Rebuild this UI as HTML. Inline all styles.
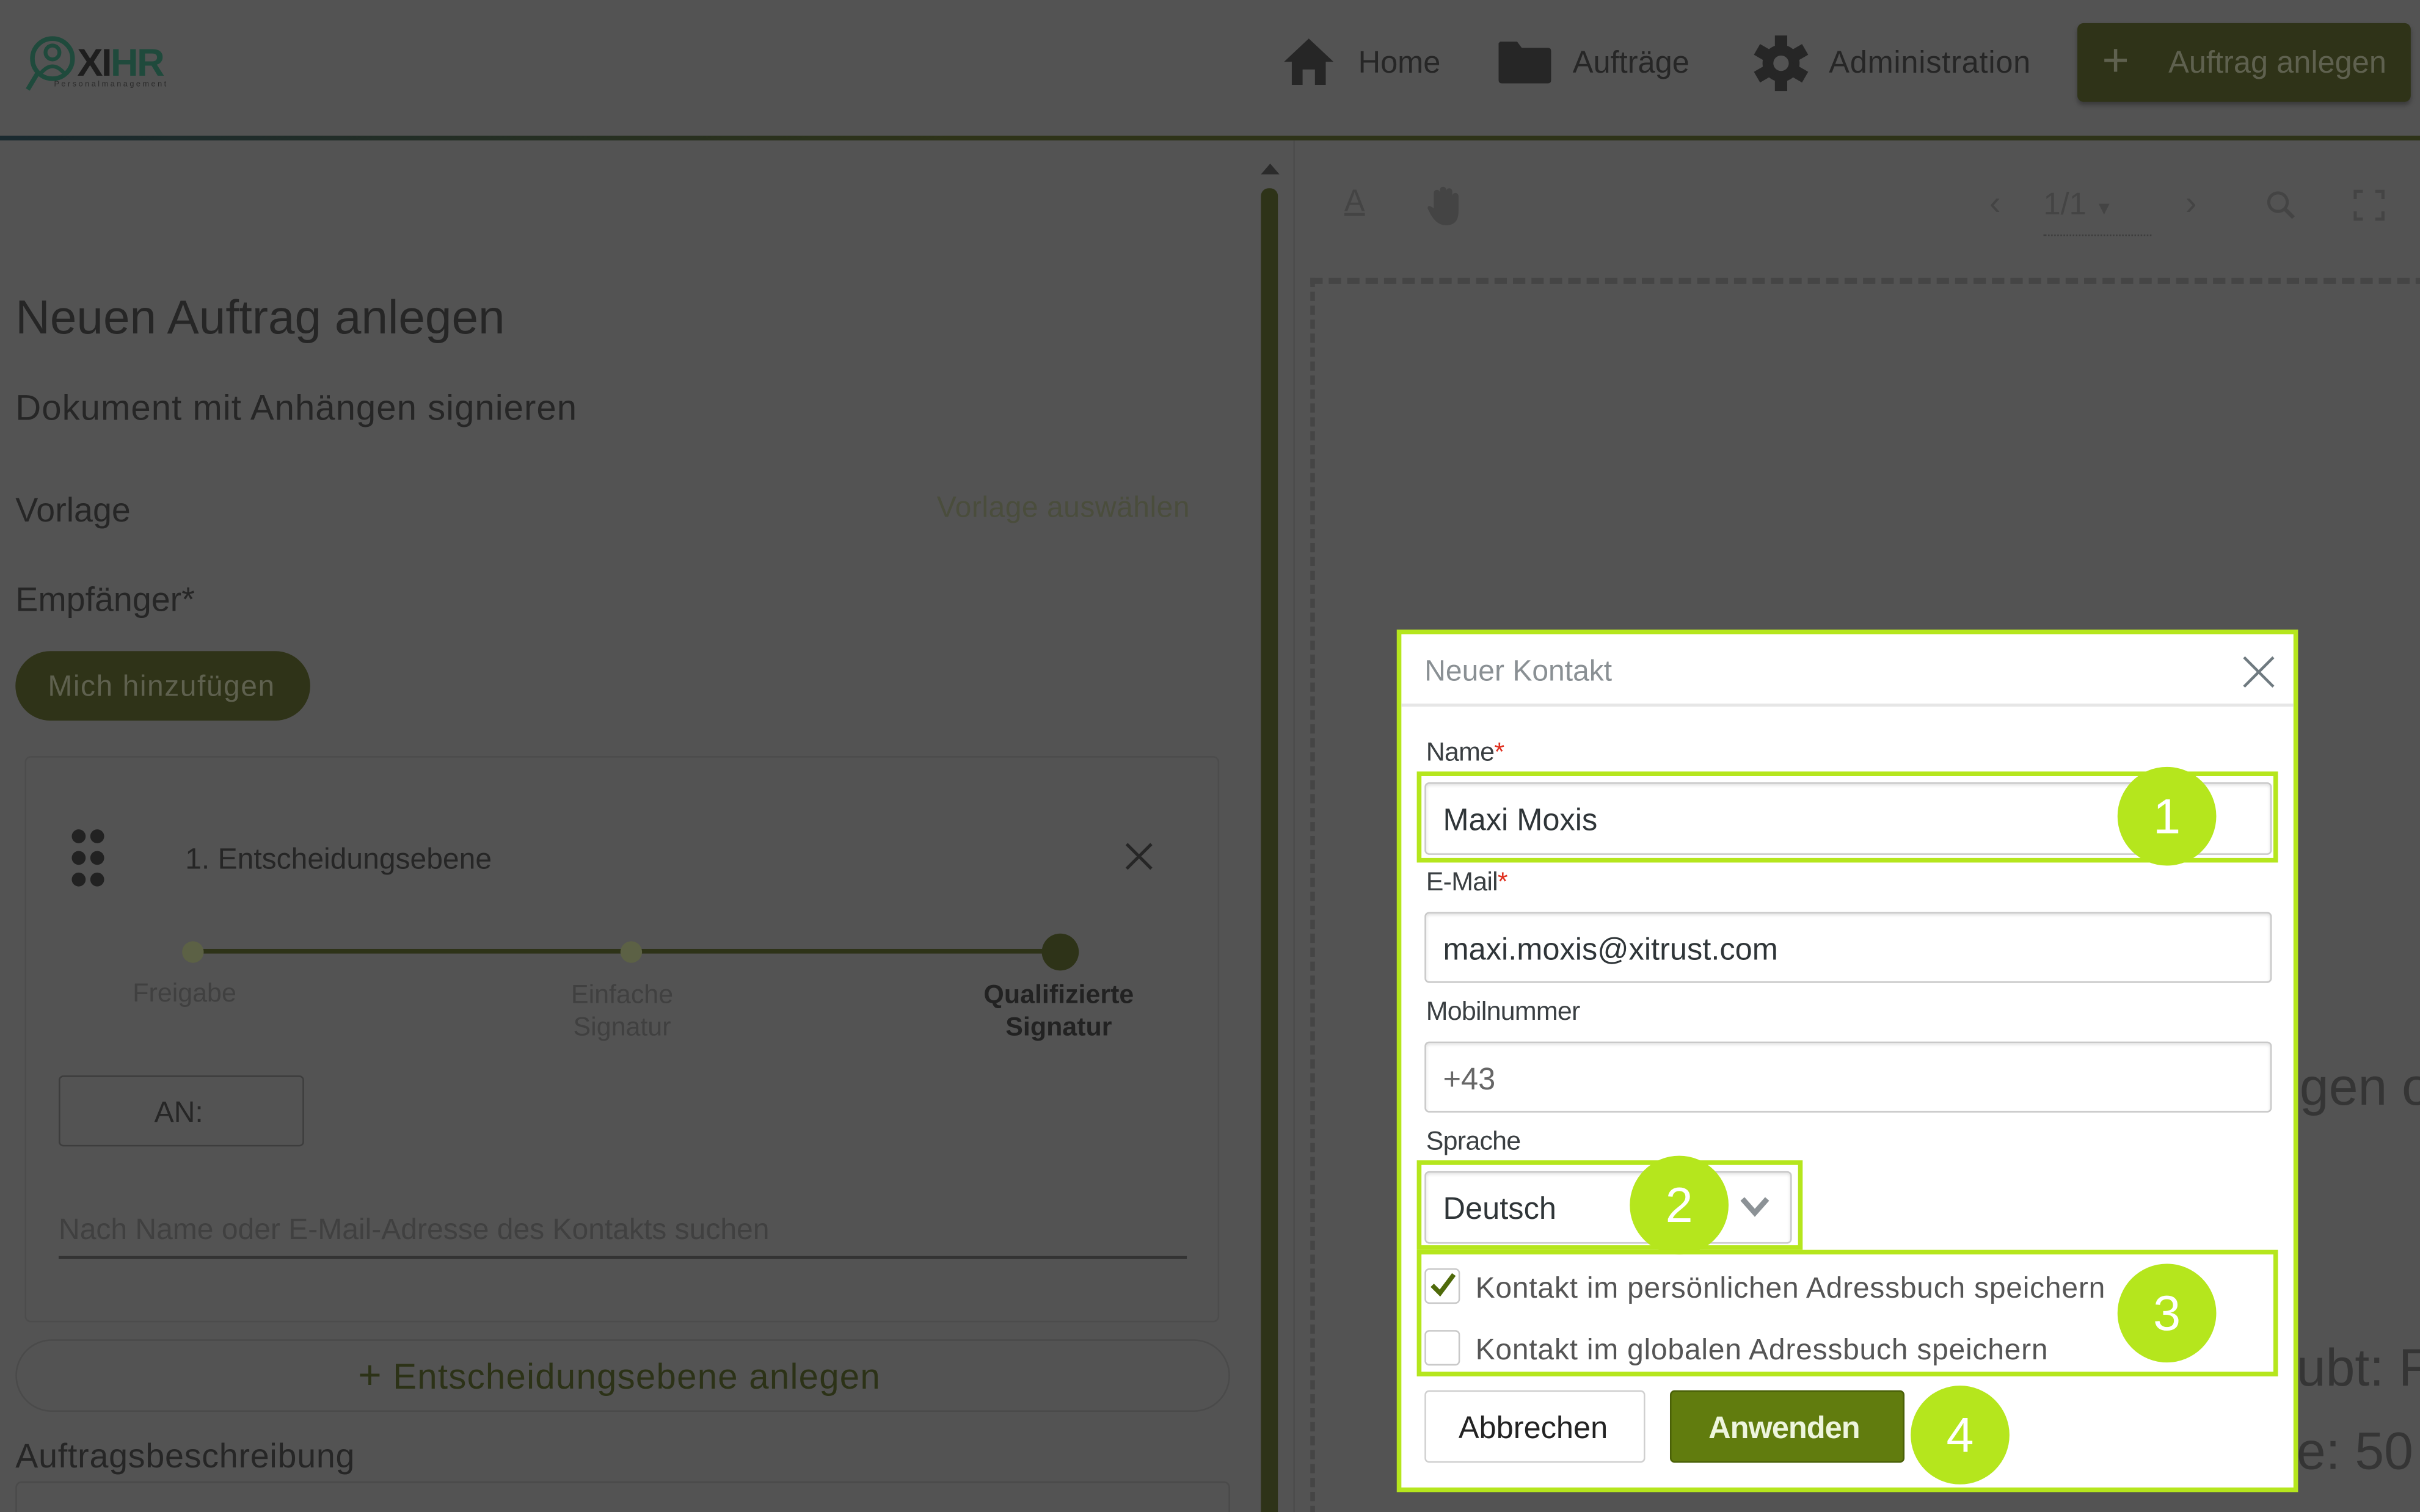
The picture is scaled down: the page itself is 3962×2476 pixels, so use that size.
<!DOCTYPE html>
<html><head><meta charset="utf-8"><style>
html,body{margin:0;padding:0;width:3962px;height:2475px;overflow:hidden;background:#4f4f4f;}
#s{position:absolute;left:0;top:0;width:1568px;height:980px;transform:scale(2.52679);transform-origin:0 0;background:#535353;font-family:"Liberation Sans",sans-serif;overflow:hidden;}
.a{position:absolute;white-space:nowrap;}
.d{color:#262626;}
.lime{position:absolute;border:3px solid #b5e61d;box-sizing:border-box;}
.num{position:absolute;width:64px;height:64px;border-radius:50%;background:#b5e61d;color:#fff;font-size:32px;text-align:center;line-height:64px;}
.inp{position:absolute;background:#fff;border:1px solid #c9c9c9;border-radius:3px;box-sizing:border-box;box-shadow:inset 0 1px 2px rgba(0,0,0,.12);}
.lbl{position:absolute;font-size:17px;color:#3a3f42;letter-spacing:-.3px;}
</style></head><body><div id="s">
<!-- header -->
<div class="a" style="left:0;top:88px;width:1568px;height:3px;background:linear-gradient(90deg,#1a2a30,#2e3318 40%,#2e3318);"></div>
<svg class="a" style="left:14px;top:22px" width="40" height="40" viewBox="0 0 40 40"><circle cx="20" cy="16" r="13" fill="none" stroke="#1f4a3c" stroke-width="3"/><circle cx="20" cy="12" r="4.5" fill="none" stroke="#1f4a3c" stroke-width="2.5"/><path d="M12 26 Q20 16 28 26" fill="none" stroke="#1f4a3c" stroke-width="2.5"/><path d="M10 26 L4 36" stroke="#1f4a3c" stroke-width="3"/></svg>
<div class="a" style="left:50px;top:27px;font-size:25px;font-weight:bold;letter-spacing:-1px;"><span style="color:#1e1e1e">XI</span><span style="color:#1f4a3c">HR</span></div>
<div class="a" style="left:35px;top:52px;font-size:5px;color:#2a2a2a;letter-spacing:1.4px">Personalmanagement</div>
<svg class="a" style="left:831px;top:24px" width="34" height="32" viewBox="0 0 34 32"><path d="M17 1 L33 16 L28 16 L28 31 L21 31 L21 21 L13 21 L13 31 L6 31 L6 16 L1 16 Z" fill="#262626"/></svg>
<div class="a d" style="left:880px;top:30px;font-size:20px;">Home</div>
<svg class="a" style="left:970px;top:25px" width="36" height="30" viewBox="0 0 36 30"><path d="M2 2 H13 L16 6 H33 Q35 6 35 8 V27 Q35 29 33 29 H3 Q1 29 1 27 V3 Z" fill="#262626"/></svg>
<div class="a d" style="left:1019px;top:30px;font-size:20px;">Aufträge</div>
<svg class="a" style="left:1136px;top:22px" width="36" height="38" viewBox="-18 -19 36 38"><g fill="#262626"><circle r="12"/><rect x="-4" y="-18" width="8" height="36"/><rect x="-4" y="-18" width="8" height="36" transform="rotate(60)"/><rect x="-4" y="-18" width="8" height="36" transform="rotate(120)"/></g><circle r="5" fill="#535353"/></svg>
<div class="a d" style="left:1185px;top:30px;font-size:20px;letter-spacing:.3px">Administration</div>
<div class="a" style="left:1346px;top:15px;width:216px;height:51px;background:#2f3318;border-radius:4px;box-shadow:0 2px 3px rgba(0,0,0,.3)"></div>
<div class="a" style="left:1362px;top:26px;font-size:30px;color:#5f614f;line-height:28px">+</div>
<div class="a" style="left:1405px;top:30px;font-size:20px;color:#5f614f;">Auftrag anlegen</div>
<!-- left -->
<div class="a d" style="left:10px;top:188px;font-size:31px;letter-spacing:0">Neuen Auftrag anlegen</div>
<div class="a d" style="left:10px;top:251px;font-size:23px;letter-spacing:.4px">Dokument mit Anhängen signieren</div>
<div class="a d" style="left:10px;top:318px;font-size:22px;">Vorlage</div>
<div class="a" style="left:607px;top:319px;font-size:19px;color:#4a4d3c;letter-spacing:.2px">Vorlage auswählen</div>
<div class="a d" style="left:10px;top:376px;font-size:22px;">Empfänger*</div>
<div class="a" style="left:10px;top:422px;width:191px;height:45px;border-radius:23px;background:#2f3318;"></div>
<div class="a" style="left:31px;top:435px;font-size:19px;color:#5f614f;letter-spacing:.6px">Mich hinzufügen</div>
<div class="a" style="left:16px;top:490px;width:774px;height:367px;border:1px solid #4c4c4c;border-radius:4px;box-sizing:border-box"></div>
<svg class="a" style="left:44px;top:535px" width="28" height="42"><g fill="#222"><circle cx="7" cy="7" r="4.5"/><circle cx="19" cy="7" r="4.5"/><circle cx="7" cy="21" r="4.5"/><circle cx="19" cy="21" r="4.5"/><circle cx="7" cy="35" r="4.5"/><circle cx="19" cy="35" r="4.5"/></g></svg>
<div class="a d" style="left:120px;top:547px;font-size:19px;letter-spacing:0">1. Entscheidungsebene</div>
<svg class="a" style="left:728px;top:545px" width="20" height="20"><path d="M2 2 L18 18 M18 2 L2 18" stroke="#262626" stroke-width="2"/></svg>
<div class="a" style="left:125px;top:615px;width:562px;height:3px;background:#2e3318"></div>
<div class="a" style="left:118px;top:610px;width:14px;height:14px;border-radius:50%;background:#5c6145"></div>
<div class="a" style="left:402px;top:610px;width:14px;height:14px;border-radius:50%;background:#5c6145"></div>
<div class="a" style="left:675px;top:605px;width:24px;height:24px;border-radius:50%;background:#2e3318"></div>
<div class="a" style="left:86px;top:634px;font-size:17px;color:#404040">Freigabe</div>
<div class="a" style="left:370px;top:634px;font-size:17px;color:#404040;text-align:center;line-height:21px">Einfache<br>Signatur</div>
<div class="a" style="left:636px;top:634px;font-size:17px;color:#222;font-weight:bold;text-align:center;line-height:21px;width:100px">Qualifizierte<br>Signatur</div>
<div class="a" style="left:38px;top:697px;width:159px;height:46px;border:1px solid #3d3d3d;border-radius:3px;box-sizing:border-box"></div>
<div class="a d" style="left:100px;top:711px;font-size:19px">AN:</div>
<div class="a" style="left:38px;top:787px;font-size:19px;color:#404040;letter-spacing:0">Nach Name oder E-Mail-Adresse des Kontakts suchen</div>
<div class="a" style="left:38px;top:814px;width:731px;height:2px;background:#333"></div>
<div class="a" style="left:10px;top:868px;width:787px;height:47px;border:1px solid #4a4a4a;border-radius:24px;box-sizing:border-box"></div>
<div class="a" style="left:232px;top:879px;font-size:23px;color:#2c3217;letter-spacing:.5px"><span style="font-size:26px;line-height:22px">+</span> Entscheidungsebene anlegen</div>
<div class="a d" style="left:10px;top:931px;font-size:22px;letter-spacing:.3px">Auftragsbeschreibung</div>
<div class="a" style="left:10px;top:960px;width:787px;height:40px;border:1px solid #4a4a4a;border-radius:4px;box-sizing:border-box"></div>
<!-- scrollbar -->
<div class="a" style="left:817px;top:106px;width:0;height:0;border-left:6px solid transparent;border-right:6px solid transparent;border-bottom:7px solid #2b2b2b"></div>
<div class="a" style="left:817px;top:122px;width:11px;height:870px;background:#2e3318;border-radius:5px"></div>
<div class="a" style="left:838px;top:91px;width:1px;height:900px;background:#4c4c4c"></div>
<!-- right toolbar -->
<div class="a" style="left:871px;top:120px;font-size:20px;color:#444;text-decoration:underline">A</div>
<svg class="a" style="left:924px;top:119px" width="26" height="28" viewBox="0 0 26 28"><path d="M5 14 V6 a2 2 0 0 1 4 0 V4 a2 2 0 0 1 4 0 V5 a2 2 0 0 1 4 0 V8 a2 2 0 0 1 4 0 V18 Q21 27 13 27 Q7 27 3 20 L1 16 Q1 13 5 16 Z" fill="#444"/></svg>
<div class="a" style="left:1289px;top:119px;font-size:22px;color:#444">‹</div>
<div class="a" style="left:1324px;top:122px;font-size:20px;color:#444">1/1 <span style="font-size:12px">▼</span></div>
<div class="a" style="left:1324px;top:152px;width:70px;height:1px;border-top:1px dotted #3c3c3c"></div>
<div class="a" style="left:1416px;top:119px;font-size:22px;color:#444">›</div>
<svg class="a" style="left:1467px;top:122px" width="22" height="22"><circle cx="9" cy="9" r="6" fill="none" stroke="#444" stroke-width="2"/><path d="M13 13 L19 19" stroke="#444" stroke-width="2.5"/></svg>
<svg class="a" style="left:1524px;top:122px" width="22" height="22" fill="none" stroke="#444" stroke-width="2"><path d="M2 7V2H7M15 2H20V7M20 15V20H15M7 20H2V15"/></svg>
<div class="a" style="left:849px;top:180px;width:760px;height:820px;border-top:4px dashed #454545;border-left:3px dashed #454545;box-sizing:border-box"></div>
<div class="a" style="left:1490px;top:686px;font-size:34px;color:#353535">gen o</div>
<div class="a" style="left:1488px;top:868px;font-size:34px;color:#353535">ubt: F</div>
<div class="a" style="left:1488px;top:922px;font-size:34px;color:#353535">e: 50 N</div>
<!-- dialog -->
<div class="a" style="left:905px;top:408px;width:584px;height:559px;background:#b5e61d"></div>
<div class="a" style="left:908px;top:411px;width:578px;height:553px;background:#fff"></div>
<div class="a" style="left:923px;top:425px;font-size:19px;color:#8a9094;letter-spacing:0">Neuer Kontakt</div>
<svg class="a" style="left:1453px;top:425px" width="21" height="21"><path d="M1 1 L20 20 M20 1 L1 20" stroke="#6f7a80" stroke-width="1.8"/></svg>
<div class="a" style="left:908px;top:456px;width:578px;height:2px;background:#e6e6e6"></div>
<div class="lbl" style="left:924px;top:478px">Name<span style="color:#e03020">*</span></div>
<div class="lime" style="left:918px;top:500px;width:558px;height:59px"></div>
<div class="inp" style="left:923px;top:507px;width:549px;height:47px"></div>
<div class="a" style="left:935px;top:521px;font-size:20px;color:#2f3538;letter-spacing:0">Maxi Moxis</div>
<div class="num" style="left:1372px;top:497px">1</div>
<div class="lbl" style="left:924px;top:562px">E-Mail<span style="color:#e03020">*</span></div>
<div class="inp" style="left:923px;top:591px;width:549px;height:46px"></div>
<div class="a" style="left:935px;top:605px;font-size:20px;color:#2f3538;letter-spacing:0">maxi.moxis@xitrust.com</div>
<div class="lbl" style="left:924px;top:646px">Mobilnummer</div>
<div class="inp" style="left:923px;top:675px;width:549px;height:46px"></div>
<div class="a" style="left:935px;top:689px;font-size:20px;color:#666">+43</div>
<div class="lbl" style="left:924px;top:730px">Sprache</div>
<div class="lime" style="left:918px;top:752px;width:250px;height:58px"></div>
<div class="inp" style="left:923px;top:759px;width:238px;height:47px"></div>
<div class="a" style="left:935px;top:773px;font-size:20px;color:#2f3538">Deutsch</div>
<svg class="a" style="left:1127px;top:775px" width="20" height="14"><path d="M2 2 L10 11 L18 2" fill="none" stroke="#8c9296" stroke-width="3.5"/></svg>
<div class="num" style="left:1056px;top:749px">2</div>
<div class="lime" style="left:918px;top:810px;width:558px;height:82px"></div>
<div class="inp" style="left:923px;top:822px;width:23px;height:23px;box-shadow:none"></div>
<svg class="a" style="left:926px;top:823px" width="18" height="18"><path d="M2 10 L7 15 L16 3" fill="none" stroke="#4f6a0a" stroke-width="3"/></svg>
<div class="a" style="left:956px;top:825px;font-size:19px;color:#555;letter-spacing:.3px">Kontakt im persönlichen Adressbuch speichern</div>
<div class="inp" style="left:923px;top:862px;width:23px;height:23px;box-shadow:none"></div>
<div class="a" style="left:956px;top:865px;font-size:19px;color:#555;letter-spacing:.3px">Kontakt im globalen Adressbuch speichern</div>
<div class="num" style="left:1372px;top:819px">3</div>
<div class="a" style="left:923px;top:901px;width:143px;height:47px;border:1px solid #d0d0d0;border-radius:3px;box-sizing:border-box;background:#fff"></div>
<div class="a" style="left:945px;top:915px;font-size:20px;color:#222;letter-spacing:0">Abbrechen</div>
<div class="a" style="left:1082px;top:901px;width:152px;height:47px;border:1px solid #4a6008;border-radius:3px;box-sizing:border-box;background:#617c0e"></div>
<div class="a" style="left:1107px;top:915px;font-size:20px;color:#eef5dd;font-weight:bold;letter-spacing:-.4px">Anwenden</div>
<div class="num" style="left:1238px;top:898px">4</div>
</div></body></html>
